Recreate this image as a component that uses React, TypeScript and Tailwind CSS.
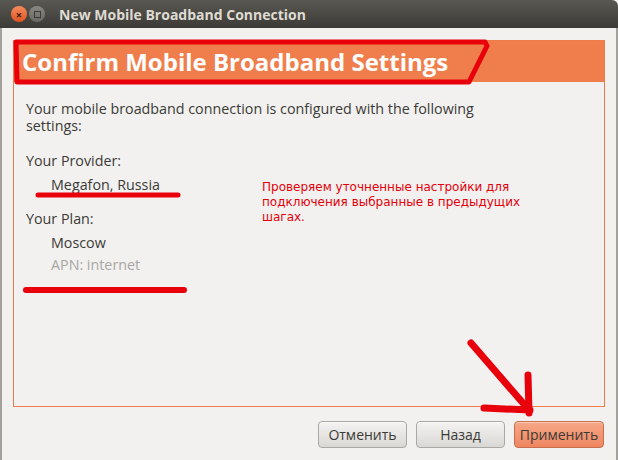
import React from 'react';

const ui = { fontFamily: '"Open Sans", "Noto Sans", sans-serif' };

function Button({ label, primary }: { label: string; primary?: boolean }) {
  return (
    <button
      className={
        primary
          ? 'h-[27px] w-[90px] rounded-[4px] border border-[#c8704c] bg-gradient-to-b from-[#f6a887] to-[#ee8560] text-[14px] text-[#3c3b37] shadow-[inset_0_1px_0_rgba(255,255,255,0.4)]'
          : 'h-[27px] w-[89px] rounded-[4px] border border-[#a9a8a4] bg-gradient-to-b from-[#f4f3f2] to-[#d9d8d5] text-[14px] text-[#3c3b37] shadow-[inset_0_1px_0_rgba(255,255,255,0.7)]'
      }
      style={ui}
    >
      {label}
    </button>
  );
}

export default function App() {
  return (
    <div className="relative w-[618px] h-[460px] overflow-hidden bg-[#f2f1f0]" style={ui}>
      {/* Title bar */}
      <div className="h-[28px] flex items-center bg-gradient-to-b from-[#5a5852] to-[#3c3b37] rounded-tr-[6px]">
        <div className="ml-[11px] w-[16px] h-[16px] rounded-full bg-gradient-to-b from-[#f58a5c] to-[#e0531e] flex items-center justify-center text-[#3a2015] text-[11px] font-bold leading-none">
          ×
        </div>
        <div className="ml-[2px] w-[16px] h-[16px] rounded-full bg-gradient-to-b from-[#8a8883] to-[#6a6863] flex items-center justify-center">
          <div className="w-[7px] h-[7px] border border-[#3c3b37]" />
        </div>
        <span className="ml-[14px] text-[14px] font-bold text-[#dfdbd2]">New Mobile Broadband Connection</span>
      </div>

      {/* Body */}
      <div className="h-[432px] border-l-2 border-r-2 border-[#a3a19c] pl-[11px] pt-[12px] flex flex-col">
        <div className="w-[592px] h-[367px] border border-[#ee7b4c] flex flex-col">
          <div className="h-[41px] bg-[#f07e4c] flex items-center pl-[8px]">
            <span className="text-[24px] font-bold text-white leading-none">Confirm Mobile Broadband Settings</span>
          </div>
          <div className="flex pl-[12px] pt-[18px] text-[14.3px] leading-[17px] text-[#3c3b37]">
            <div className="flex flex-col">
              <p className="w-[480px]">Your mobile broadband connection is configured with the following settings:</p>
              <p className="mt-[18px]">Your Provider:</p>
              <p className="mt-[7px] pl-[25px]">Megafon, Russia</p>
              <p className="mt-[17px]">Your Plan:</p>
              <p className="mt-[7px] pl-[25px]">Moscow</p>
              <p className="mt-[5px] pl-[25px] text-[#a8a7a3]">APN: internet</p>
            </div>
          </div>
        </div>

        <div className="flex justify-end gap-[9px] mt-[14px] pr-[12px]">
          <Button label="Отменить" />
          <Button label="Назад" />
          <Button label="Применить" primary />
        </div>
      </div>

      {/* Red note */}
      <p
        className="absolute left-[262px] top-[180px] w-[270px] text-[12px] leading-[15px] text-[#e3000b]"
        style={{ fontFamily: '"DejaVu Sans", sans-serif' }}
      >
        Проверяем уточненные настройки для подключения выбранные в предыдущих шагах.
      </p>

      {/* Hand-drawn marks */}
      <svg className="absolute inset-0 pointer-events-none" width="618" height="460">
        <g stroke="#e8000a" strokeWidth="5" fill="none" strokeLinecap="round" strokeLinejoin="round">
          <path d="M16 42 L485 42 L487 46 L469 82 L17 82 L16 42" />
          <path d="M38 195 L178 195" />
          <path d="M26 290 L184 290" strokeWidth="6" />
          <path d="M471 343 L529 410" strokeWidth="7" />
          <path d="M528 375 L529 413" strokeWidth="7" />
          <path d="M484 408 L530 410" strokeWidth="7" />
        </g>
      </svg>
    </div>
  );
}
